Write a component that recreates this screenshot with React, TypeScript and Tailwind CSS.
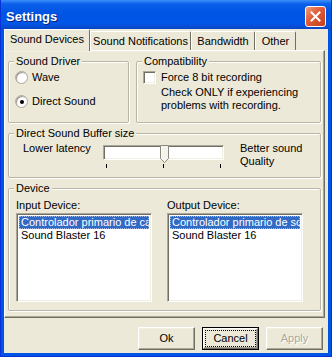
import React from "react";

const sunken =
  "border border-t-[#ACA899] border-l-[#ACA899] border-b-white border-r-white shadow-[inset_1px_1px_0_#716F64,inset_-1px_-1px_0_#F1EFE2]";
const raised =
  "border border-t-white border-l-white border-b-[#716F64] border-r-[#716F64] shadow-[inset_-1px_-1px_0_#ACA899,inset_1px_1px_0_#F1EFE2]";
const group =
  "border border-[#B9B6A8] rounded-[2px] shadow-[inset_1px_1px_0_#fff,1px_1px_0_#fff] px-[5px] min-w-0";

function Legend({ children }: { children: React.ReactNode }) {
  return <legend className="px-[2px] h-[13px] leading-[13px] bg-[#ECE9D8]">{children}</legend>;
}

function Radio({ label, checked }: { label: string; checked?: boolean }) {
  return (
    <div className="flex items-center h-[13px] gap-[4px]">
      <span className="w-[13px] h-[13px] rounded-full bg-white border border-[#ACA899] shadow-[inset_1px_1px_0_#9d9a8c] flex items-center justify-center">
        {checked && <span className="w-[4px] h-[4px] rounded-full bg-black" />}
      </span>
      <span>{label}</span>
    </div>
  );
}

function ListBox({ items }: { items: string[] }) {
  return (
    <div className={`w-[136px] h-[89px] bg-white p-[2px] ${sunken}`}>
      {items.map((it, i) => (
        <div
          key={it}
          className={`h-[13px] leading-[13px] pl-[2px] whitespace-nowrap overflow-hidden ${
            i === 0 ? "bg-[#316AC5] text-white outline-1 outline-dotted outline-[#9fb8e6] -outline-offset-1" : ""
          }`}
        >
          {it}
        </div>
      ))}
    </div>
  );
}

function Button({ label, variant }: { label: string; variant?: "default" | "disabled" }) {
  if (variant === "default") {
    return (
      <div className="w-[57px] h-[23px] border border-black">
        <div className={`w-full h-full p-[2px] ${raised}`}>
          <div className="w-full h-full flex items-center justify-center outline-1 outline-dotted outline-black">
            {label}
          </div>
        </div>
      </div>
    );
  }
  return (
    <div
      className={`w-[57px] h-[23px] flex items-center justify-center ${raised} ${
        variant === "disabled" ? "text-[#ACA899] [text-shadow:1px_1px_0_#fff]" : ""
      }`}
    >
      {label}
    </div>
  );
}

const tabs = [
  { label: "Sound Notifications", w: "w-[101px]" },
  { label: "Bandwidth", w: "w-[64px]" },
  { label: "Other", w: "w-[41px]" },
];

export default function App() {
  return (
    <div className="w-[332px] h-[357px] flex flex-col bg-[#0054E3] border-l border-r border-b border-[#0831D9] font-['Liberation_Sans',Arial,sans-serif] text-[11px] text-black select-none">
      {/* title bar */}
      <div className="h-[29px] flex items-center justify-between pl-[5px] pr-[5px] pt-[4px] bg-[linear-gradient(180deg,#3D8FF9_0%,#0A5FEA_14%,#0054E3_45%,#0056E7_82%,#0A45C2_100%)]">
        <span className="text-white font-bold text-[13px] [text-shadow:1px_1px_0_#0A1F7A]">Settings</span>
        <div className="w-[21px] h-[21px] rounded-[3px] border border-white bg-[linear-gradient(135deg,#F09A7C_0%,#E05A36_45%,#C2401E_100%)] flex items-center justify-center">
          <svg width="11" height="11" viewBox="0 0 11 11">
            <path d="M1.5 1.5 L9.5 9.5 M9.5 1.5 L1.5 9.5" stroke="#fff" strokeWidth="2" strokeLinecap="square" />
          </svg>
        </div>
      </div>

      {/* client */}
      <div className="flex-1 mx-[3px] mb-[3px] bg-[#ECE9D8] flex flex-col">
        <div className="h-[22px] flex items-end -mb-px relative z-10">
          <div className="w-[86px] h-[22px] flex items-center justify-center bg-[#ECE9D8] border-l border-t border-r border-l-white border-t-white border-r-[#716F64] rounded-tr-[2px] pb-[2px]">
            Sound Devices
          </div>
          {tabs.map((t) => (
            <div
              key={t.label}
              className={`${t.w} h-[19px] mb-px flex items-center justify-center border-l border-t border-r border-l-white border-t-white border-r-[#716F64] rounded-tr-[2px]`}
            >
              {t.label}
            </div>
          ))}
        </div>

        {/* panel */}
        <div className={`mr-[3px] h-[268px] pt-[4px] pl-[3px] pr-[3px] flex flex-col gap-[4px] ${raised}`}>
          <div className="flex gap-[7px]">
            <fieldset className={`${group} w-[121px] h-[68px]`}>
              <Legend>Sound Driver</Legend>
              <div className="flex flex-col gap-[11px] pt-[3px] pl-px">
                <Radio label="Wave" />
                <Radio label="Direct Sound" checked />
              </div>
            </fieldset>
            <fieldset className={`${group} flex-1 h-[68px]`}>
              <Legend>Compatibility</Legend>
              <div className="pt-[3px] pl-px flex gap-[5px]">
                <span className={`w-[13px] h-[13px] bg-white shrink-0 ${sunken}`} />
                <div className="flex flex-col leading-[13px]">
                  <span>Force 8 bit recording</span>
                  <span className="mt-[2px]">Check ONLY if experiencing</span>
                  <span>problems with recording.</span>
                </div>
              </div>
            </fieldset>
          </div>

          <fieldset className={`${group} h-[51px]`}>
            <Legend>Direct Sound Buffer size</Legend>
            <div className="flex pt-[2px] pl-[9px] leading-[13px]">
              <span className="w-[80px]">Lower latency</span>
              <div className="relative w-[121px] h-[24px] mt-[3px]">
                <div className={`w-full h-[15px] bg-white ${sunken}`} />
                <svg className="absolute left-[57px] top-0" width="9" height="18" viewBox="0 0 9 18">
                  <polygon points="0.5,0.5 8.5,0.5 8.5,13.5 4.5,17.5 0.5,13.5" fill="#F4F3EE" stroke="#8A887C" />
                  <path d="M1.5 1.5 V13 L4.5 16" stroke="#fff" fill="none" />
                </svg>
                <span className="absolute left-[3px] top-[19px] w-px h-[4px] bg-black" />
                <span className="absolute left-[60px] top-[19px] w-px h-[4px] bg-black" />
                <span className="absolute left-[117px] top-[19px] w-px h-[4px] bg-black" />
              </div>
              <div className="ml-[16px] flex flex-col">
                <span>Better sound</span>
                <span>Quality</span>
              </div>
            </div>
          </fieldset>

          <fieldset className={`${group} h-[129px]`}>
            <Legend>Device</Legend>
            <div className="flex gap-[15px] pl-[2px] pt-[4px]">
              <div className="flex flex-col">
                <span className="h-[13px] leading-[13px] mb-px">Input Device:</span>
                <ListBox items={["Controlador primario de captura de sonido", "Sound Blaster 16"]} />
              </div>
              <div className="flex flex-col">
                <span className="h-[13px] leading-[13px] mb-px">Output Device:</span>
                <ListBox items={["Controlador primario de sonido", "Sound Blaster 16"]} />
              </div>
            </div>
          </fieldset>
        </div>

        <div className="mt-[9px] flex justify-end gap-[7px] pr-[5px]">
          <Button label="Ok" />
          <Button label="Cancel" variant="default" />
          <Button label="Apply" variant="disabled" />
        </div>
      </div>
    </div>
  );
}
